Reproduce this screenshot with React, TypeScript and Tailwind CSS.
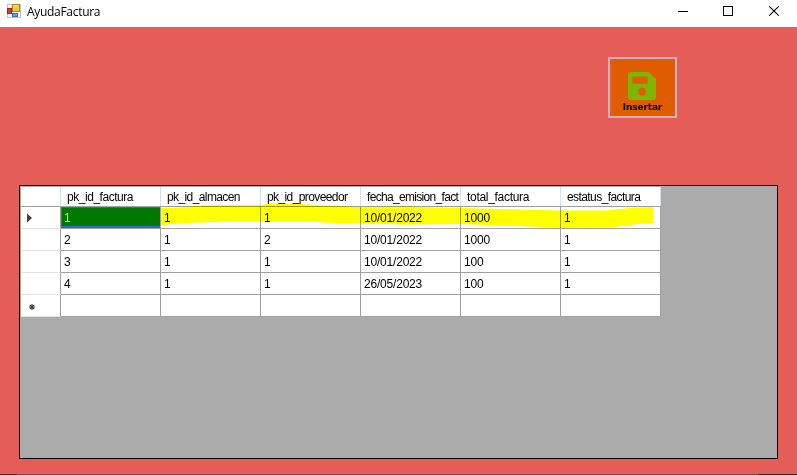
import React from "react";

type Column = { name: string; heading: string };

const columns: Column[] = [
  { name: "pk_id_factura", heading: "tracking-[-0.46px]" },
  { name: "pk_id_almacen", heading: "tracking-[-0.6px]" },
  { name: "pk_id_proveedor", heading: "tracking-[-0.6px]" },
  { name: "fecha_emision_fact", heading: "tracking-[-0.68px]" },
  { name: "total_factura", heading: "tracking-[-0.3px]" },
  { name: "estatus_factura", heading: "tracking-[-0.58px]" },
];

const rows: string[][] = [
  ["1", "1", "1", "10/01/2022", "1000", "1"],
  ["2", "1", "2", "10/01/2022", "1000", "1"],
  ["3", "1", "1", "10/01/2022", "100", "1"],
  ["4", "1", "1", "26/05/2023", "100", "1"],
  ["", "", "", "", "", ""],
];

function FormIcon() {
  return (
    <svg width="14" height="14" viewBox="0 0 14 14" className="mt-1 ml-[7px] shrink-0">
      <rect x="0.5" y="0.5" width="13" height="13" fill="#f3f5f7" stroke="#bcc5cc" />
      <rect x="5.5" y="0.5" width="7" height="7" fill="#f4c83b" stroke="#b5861a" />
      <path d="M7 2h4" stroke="#fbe58b" />
      <rect x="0.5" y="4.5" width="4" height="5" fill="#cf3e35" stroke="#a32621" />
      <rect x="5.5" y="9.5" width="5" height="3" fill="#6c9ceb" stroke="#3c6dc5" />
    </svg>
  );
}

function TitleBar() {
  return (
    <header className="flex h-[27px] items-start bg-white">
      <FormIcon />
      <span className="ml-1.5 mt-1 font-['Open_Sans','Noto_Sans',sans-serif] text-[12px] leading-4 tracking-[-0.3px] text-black">
        AyudaFactura
      </span>
      <svg width="119" height="27" viewBox="0 0 119 27" fill="none" stroke="#000" className="ml-auto">
        <path d="M0 11.5h10" />
        <rect x="45.5" y="6.5" width="9" height="9" />
        <path d="M91.3 6.3l9.4 9.4M100.7 6.3l-9.4 9.4" strokeWidth="1.1" />
      </svg>
    </header>
  );
}

function InsertButton() {
  return (
    <button className="ml-[608px] mt-[30px] flex h-[61px] w-[69px] flex-col items-center border-2 border-[#d0b0b2] bg-[#df5d00] shadow-[inset_2px_0_0_#d9603c,inset_-1px_-1px_0_#dc5b2c]">
      <svg width="28" height="28" viewBox="0 0 28 28" className="mt-[13px] mr-px shrink-0">
        <path
          fillRule="evenodd"
          fill="#7fb500"
          d="M3.5 0H20.5L28 7V24.5Q28 28 24.5 28H3.5Q0 28 0 24.5V3.5Q0 0 3.5 0ZM5.5 4.5Q4.3 4.5 4.3 5.7V10.6Q4.3 11.7 5.5 11.7H18.6Q19.8 11.7 19.8 10.6V5.7Q19.8 4.5 18.6 4.5ZM14 15.8A3.9 3.9 0 1 0 14 23.6A3.9 3.9 0 1 0 14 15.8Z"
        />
      </svg>
      <span className="mt-[1px] font-['DejaVu_Sans',sans-serif] text-[9px] font-bold leading-[12px] tracking-[-0.15px] text-black">
        Insertar
      </span>
    </button>
  );
}

function RowMarker({ index }: { index: number }) {
  if (index === 0)
    return (
      <svg width="6" height="10" viewBox="0 0 6 10" className="ml-1.5 mt-px">
        <path d="M0 0.5L5 5L0 9.5Z" fill="#404040" />
      </svg>
    );
  if (index === rows.length - 1)
    return (
      <svg width="6" height="6" viewBox="0 0 6 6" className="ml-2 mt-0.5">
        <path d="M3 0v6M0 3h6M0.8 0.8l4.4 4.4M5.2 0.8L0.8 5.2" stroke="#404040" strokeWidth="1.1" />
      </svg>
    );
  return null;
}

function Highlighter() {
  return (
    <svg
      width="640"
      height="45"
      viewBox="21 187 640 45"
      className="pointer-events-none absolute left-[1px] top-[1px] mix-blend-multiply"
    >
      <path
        fill="#ffff00"
        d="M161 208L180 207.5L205 205L262 205L267 204L300 204L334 206L360 207L406 206.5L460 208L560 210.5L606 210.5L629 208L653 207V223L638 224L610 227.5L560 228L520 226L460 224L405 224.5L360 223H330L310 221.5L230 221.5L185 223L161 225Z"
      />
    </svg>
  );
}

function DataTable() {
  return (
    <section className="relative ml-[19px] mt-[67px] h-[274px] w-[759px] border border-black bg-[#ababab] pl-px pt-px font-['Liberation_Sans',Arial,sans-serif] text-[12px] text-black">
      <div className="flex h-5 w-[640px] border-b border-[#a0a0a0] bg-white">
        <div className="w-10 shrink-0 border-r border-[#d9dfe8]" />
        {columns.map((column) => (
          <div
            key={column.name}
            className={`w-[100px] shrink-0 whitespace-nowrap border-r border-[#d9dfe8] pl-1.5 leading-[21px] ${column.heading}`}
          >
            {column.name}
          </div>
        ))}
      </div>
      {rows.map((row, index) => (
        <div key={index} className="flex h-[22px] w-[640px] bg-white">
          <div className="flex w-10 shrink-0 items-center border-b border-r border-b-[#e2e2e2] border-r-[#a0a0a0]">
            <RowMarker index={index} />
          </div>
          {row.map((value, cell) => (
            <div
              key={cell}
              className={`w-[100px] shrink-0 border-b border-r border-[#a0a0a0] pl-[3px] leading-[22px] tracking-[-0.2px] ${
                index === 0 && cell === 0
                  ? "bg-[#007800] text-[#d4f500] shadow-[inset_1px_-2px_0_#1874c8,inset_0_1px_0_#1874c8]"
                  : ""
              }`}
            >
              {value}
            </div>
          ))}
        </div>
      ))}
      <Highlighter />
    </section>
  );
}

export default function App() {
  return (
    <main className="flex h-[475px] w-[797px] flex-col overflow-hidden bg-[#e45d56]">
      <TitleBar />
      <InsertButton />
      <DataTable />
      <div className="mt-[15px] flex h-px bg-[#8c4144]">
        <div className="w-[17px] bg-[#651d1b]" />
        <div className="ml-auto w-[39px] bg-[#4a2026]" />
      </div>
    </main>
  );
}
